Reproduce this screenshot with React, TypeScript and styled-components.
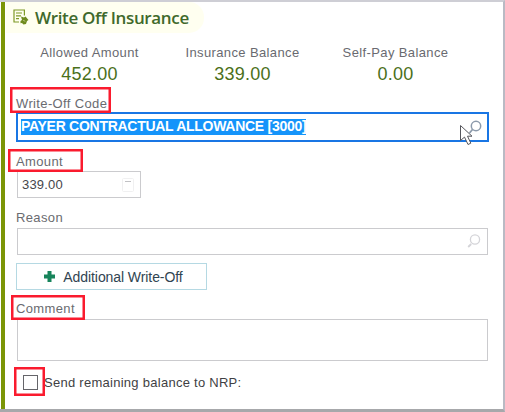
import React from "react";
import styled, { createGlobalStyle } from "styled-components";

const GlobalStyle = createGlobalStyle`
  * { box-sizing: border-box; }
  body { margin: 0; background: #fff; font-family: "Liberation Sans", Arial, sans-serif; }
`;

const Window = styled.div`
  width: 505px;
  height: 412px;
  padding: 0 0 0 1px;
  border-top: 2px solid #ceced5;
  border-right: 2px solid #b9bac4;
  border-bottom: 3px solid #a7a8ab;
  background: #fff;
  overflow: hidden;
`;

const Panel = styled.div`
  height: 407px;
  padding-left: 1px;
  border-left: 4px solid #7b9506;
`;

const Header = styled.header`
  display: flex;
  align-items: center;
  width: 198px;
  height: 31px;
  padding-left: 7px;
  gap: 6px;
  border-radius: 0 15px 15px 0;
  background: #fffff0;
`;

const Title = styled.h1`
  margin: 1px 0 0;
  font: 600 17px/24px "Open Sans", "Noto Sans", sans-serif;
  letter-spacing: -0.35px;
  color: #40692b;
  white-space: nowrap;
`;

const Summary = styled.div`
  display: grid;
  grid-template-columns: 165px 141px 165px;
  height: 53px;
  padding: 12px 0 0 1px;
`;

const Stat = styled.div`
  display: flex;
  flex-direction: column;
  align-items: center;
  white-space: nowrap;
`;

const StatName = styled.span`
  font-size: 13px;
  line-height: 16px;
  letter-spacing: 0.38px;
  color: #696a70;
`;

const StatValue = styled.span`
  margin-top: 2px;
  font-size: 18px;
  line-height: 22px;
  letter-spacing: 0.2px;
  color: #4b701a;
`;

const Field = styled.div<{ $height: number }>`
  display: flex;
  flex-direction: column;
  height: ${(p) => p.$height}px;
  padding-left: 10px;
`;

const Label = styled.label<{ $height: number; $top?: number }>`
  position: relative;
  flex: none;
  align-self: flex-start;
  height: ${(p) => p.$height}px;
  padding-top: ${(p) => p.$top ?? 0}px;
  font-size: 13px;
  line-height: 16px;
  letter-spacing: 0.36px;
  color: #6a6b70;
  white-space: nowrap;
`;

const Callout = styled.span<{ $x: number; $y: number; $w: number; $h: number }>`
  position: absolute;
  z-index: 1;
  left: ${(p) => p.$x}px;
  top: ${(p) => p.$y}px;
  width: ${(p) => p.$w}px;
  height: ${(p) => p.$h}px;
  border: 2px solid #fa1b2e;
  box-shadow: inset 0 0 0 0.5px #fa1b2e;
`;

const InputBox = styled.div<{ $width?: number; $height: number }>`
  position: relative;
  display: flex;
  flex: none;
  align-items: center;
  justify-content: space-between;
  width: ${(p) => p.$width ?? 471}px;
  height: ${(p) => p.$height}px;
  margin-left: 1px;
  padding: 0 6px 0 4px;
  border: 1px solid #cbcbce;
`;

const ActiveBox = styled(InputBox)`
  width: 473px;
  margin-left: 0;
  padding: 0 4px 0 3px;
  border: 2px solid #1976e4;
`;

const Selected = styled.span`
  width: 285px;
  height: 16px;
  background: #1594fa;
  font-size: 14px;
  line-height: 15px;
  letter-spacing: -0.28px;
  color: #fff;
  font-weight: bold;
  white-space: nowrap;
`;

const Value = styled.span`
  font-size: 13px;
  line-height: 16px;
  letter-spacing: 0.2px;
  color: #46464b;
`;

const AddButton = styled.button`
  display: flex;
  align-items: center;
  justify-content: center;
  gap: 7px;
  width: 191px;
  height: 27px;
  margin: 8px 0 0 10px;
  padding: 0 0 0 3px;
  border: 1px solid #b5d9e3;
  background: #fff;
  font: 14px/18px "Liberation Sans", Arial, sans-serif;
  letter-spacing: -0.08px;
  color: #304451;
`;

const CheckRow = styled.div`
  position: relative;
  display: flex;
  align-items: center;
  gap: 6px;
  height: 15px;
  margin: 14px 0 0 17px;
  font-size: 13px;
  letter-spacing: 0.27px;
  color: #3f3f44;
  white-space: nowrap;
`;

const Checkbox = styled.span`
  width: 15px;
  height: 15px;
  border: 1px solid #65656a;
`;

const Pointer = styled.svg`
  position: absolute;
  left: 440px;
  top: 4px;
`;

const NoteIcon = () => (
  <svg width="16" height="17" viewBox="0 0 16 17" fill="none" stroke="#7f9a27" strokeWidth="1.2">
    <path d="M11.4 6.5V1H1v12h5M3 4h6M3 6.8h5M3 9.6h3" />
    <path d="m8 7.5 3 1 1.5-1 3 3.5-1.5 1-1 3-2.5.5-1.5-1.5-1.5.3V12l1.5-1z" fill="#6f8b1f" stroke="none" />
    <path d="m10.6 11.2 1.2 1.2" stroke="#e6ecc0" strokeWidth="1" />
  </svg>
);

const SearchIcon = ({ color }: { color: string }) => (
  <svg width="14" height="15" viewBox="0 0 14 15" fill="none" stroke={color}>
    <circle cx="8" cy="5.5" r="4.6" strokeWidth="1.3" />
    <path d="m4.2 10-3 3" strokeWidth="1.8" />
  </svg>
);

const CalculatorIcon = () => (
  <svg width="12" height="14" viewBox="0 0 12 14" fill="none">
    <rect x=".5" y=".5" width="11" height="13" rx="1" stroke="#f0f0f1" />
    <path d="M3 3.5h6" stroke="#c1c1c4" />
  </svg>
);

const LookupPointer = () => (
  <Pointer width="28" height="30" viewBox="0 0 28 30" fill="none">
    <circle cx="18" cy="8" r="4.7" stroke="#8c9aab" strokeWidth="1.5" />
    <path d="m14.5 11.5-3 3.5" stroke="#8c9aab" strokeWidth="1.8" />
    <path d="M2.5 7.5v15l4-3.4 3.5 7.4 2.8-1.3-3.3-7h4.5z" fill="#fff" stroke="#56565c" />
  </Pointer>
);

export default function App() {
  return (
    <>
      <GlobalStyle />
      <Window>
        <Panel>
          <Header>
            <NoteIcon />
            <Title>Write Off Insurance</Title>
          </Header>
          <Summary>
            <Stat><StatName>Allowed Amount</StatName><StatValue>452.00</StatValue></Stat>
            <Stat><StatName>Insurance Balance</StatName><StatValue>339.00</StatValue></Stat>
            <Stat><StatName>Self-Pay Balance</StatName><StatValue>0.00</StatValue></Stat>
          </Summary>
          <Field $height={67}>
            <Label $height={26} $top={10}>
              Write-Off Code
              <Callout $x={-6} $y={1} $w={101} $h={26} />
            </Label>
            <ActiveBox $height={30}>
              <Selected>PAYER CONTRACTUAL ALLOWANCE [3000]</Selected>
              <LookupPointer />
            </ActiveBox>
          </Field>
          <Field $height={45}>
            <Label $height={18} $top={1}>
              Amount
              <Callout $x={-8} $y={-4} $w={75} $h={23} />
            </Label>
            <InputBox $width={124} $height={27}>
              <Value>339.00</Value>
              <CalculatorIcon />
            </InputBox>
          </Field>
          <Field $height={57}>
            <Label $height={30} $top={12}>Reason</Label>
            <InputBox $height={27}><span /><SearchIcon color="#d4d4d8" /></InputBox>
          </Field>
          <AddButton type="button">
            <svg width="13" height="13" viewBox="0 0 13 13"><path d="M6.5 1v11M1 6.5h11" stroke="#17845b" strokeWidth="4" /></svg>
            Additional Write-Off
          </AddButton>
          <Field $height={71}>
            <Label $height={29} $top={11}>
              Comment
              <Callout $x={-5} $y={5} $w={74} $h={25} />
            </Label>
            <InputBox $height={42} />
          </Field>
          <CheckRow>
            <Callout $x={-9} $y={-8} $w={31} $h={29} />
            <Checkbox />
            Send remaining balance to NRP:
          </CheckRow>
        </Panel>
      </Window>
    </>
  );
}
